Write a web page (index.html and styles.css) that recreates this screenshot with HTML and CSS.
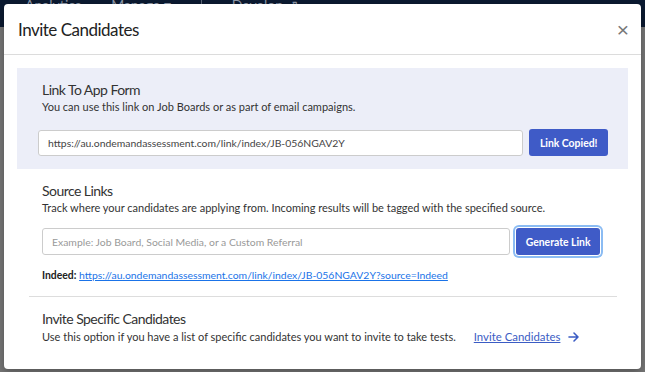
FILE: index.html
```html
<!DOCTYPE html>
<html lang="en">
<head>
    <meta charset="UTF-8">
    <meta name="viewport" content="width=device-width, initial-scale=1.0">
    <title>Invite Candidates</title>
    <link rel="stylesheet" href="styles.css">
</head>
<body>
    <!-- Page behind the modal -->
    <div class="topnav">
        <span class="nav-item nav-analytics">Analytics</span>
        <span class="nav-item nav-manage">Manage &#9662;</span>
        <span class="nav-divider"></span>
        <span class="nav-item">Develop &#8663;</span>
    </div>

    <div class="modal">
        <div class="modal-header">
            <h1>Invite Candidates</h1>
            <button class="close" type="button">&times;</button>
        </div>

        <div class="modal-body">
            <!-- Link to app form -->
            <div class="section section-shaded">
                <h2>Link To App Form</h2>
                <p>You can use this link on Job Boards or as part of email campaigns.</p>
                <div class="field-row field-row-wide">
                    <input class="text-input" type="text" value="https://au.ondemandassessment.com/link/index/JB-056NGAV2Y" readonly>
                    <button class="button-primary button-copied" type="button">Link Copied!</button>
                </div>
            </div>

            <!-- Source links -->
            <div class="section section-source">
                <h2>Source Links</h2>
                <p>Track where your candidates are applying from. Incoming results will be tagged with the specified source.</p>
                <div class="field-row">
                    <input class="text-input source-input" type="text" placeholder="Example: Job Board, Social Media, or a Custom Referral">
                    <button class="button-primary button-focus" type="button">Generate Link</button>
                </div>
                <div class="source-result">
                    <b>Indeed:</b> <a href="#">https://au.ondemandassessment.com/link/index/JB-056NGAV2Y?source=Indeed</a>
                </div>
            </div>

            <hr class="divider">

            <!-- Invite specific candidates -->
            <div class="section section-last">
                <h2>Invite Specific Candidates</h2>
                <div class="invite-row">
                    <p>Use this option if you have a list of specific candidates you want to invite to take tests.</p>
                    <a class="invite-link" href="#">Invite Candidates</a>
                    <svg class="arrow" width="12" height="12" viewBox="0 0 12 12">
                        <path d="M1 6h9M6 2l4 4-4 4" fill="none" stroke="#3b5cc4" stroke-width="1.6" stroke-linecap="round" stroke-linejoin="round"/>
                    </svg>
                </div>
            </div>
        </div>
    </div>
</body>
</html>
```

FILE: styles.css
```css
body {
    margin: 0;
    height: 372px;
    overflow: hidden;
    background: linear-gradient(#0b1a31 0, #0b1a31 27px, #767676 27px); /* navbar + dim backdrop */
    font-family: Lato, "Open Sans", sans-serif;
    color: #333;
}
.topnav {
    display: flex;
    align-items: center;
    height: 10px;
    padding-left: 25px;
    gap: 30px;
    color: #8d97a8;
    font-size: 14px;
    line-height: 10px;
    overflow: hidden;
}
.nav-divider {
    width: 1px;
    height: 10px;
    background: #5b6678;
}
.modal {
    position: absolute; /* sits over the page */
    left: 4px;
    top: 4px;
    width: 637px;
    height: 365px;
    background-color: #fff;
    border-radius: 4px;
    box-shadow: 0 3px 9px rgba(0, 0, 0, 0.3);
    overflow: hidden;
}
.modal-header {
    display: flex;
    align-items: center;
    justify-content: space-between;
    height: 50px;
    padding: 0 12px 0 14px;
    border-bottom: 1px solid #dcdcdc;
}
.modal-header h1 {
    margin: 0;
    font-size: 17px;
    font-weight: 400;
    letter-spacing: -0.5px;
    color: #222;
}
.close {
    border: none;
    background: none;
    padding: 0;
    font-size: 21px;
    line-height: 1;
    color: #777;
    font-family: Arial, sans-serif;
    cursor: pointer;
}
.modal-body {
    padding: 13px 13px 0 13px;
}
.section {
    padding: 12px 28px 10px 25px;
}
.section-shaded {
    background-color: #eceef8;
    padding: 13px 20px 13px 21px;
}
.section-shaded h2,
.section-shaded p {
    padding-left: 4px;
}
.section-source {
    padding-top: 13px;
}
.section h2 {
    margin: 0;
    font-size: 14px;
    line-height: 18px;
    font-weight: 400;
    letter-spacing: -0.55px;
    color: #333;
}
.section p {
    margin: 0;
    font-size: 11px;
    line-height: 16px;
    color: #333;
}
.field-row {
    display: flex;
    align-items: center;
    gap: 6px;
    margin-top: 12px;
}
.field-row-wide {
    margin-top: 14px;
}
.text-input {
    flex: 1;
    height: 26px;
    box-sizing: border-box;
    padding: 0 9px;
    border: 1px solid #ccc;
    border-radius: 3px;
    font-family: Lato, sans-serif;
    font-size: 10.4px;
    color: #444;
    background: #fff;
}
.source-input {
    height: 27px;
}
.source-input::placeholder {
    color: #999;
}
.button-primary {
    height: 27px;
    padding: 0 10px;
    background-color: #3f5bc7;
    color: #fff;
    border: none;
    border-radius: 3px;
    font-family: Lato, sans-serif;
    font-size: 10.4px;
    font-weight: 700;
    cursor: pointer;
}
.button-copied {
    padding: 0 10.5px;
}
.button-focus {
    padding: 0 9.5px;
    box-shadow: 0 0 0 1px #fff, 0 0 0 3px #8bbcf3;
}
.source-result {
    margin-top: 12px;
    font-size: 10.4px;
    line-height: 16px;
    color: #222;
}
.source-result a {
    color: #1a73e8;
}
.divider {
    border: none;
    border-top: 1px solid #ddd;
    margin: 3px 11px 0 12px;
}
.section-last {
    padding-top: 13px;
}
.section-last p {
    margin-top: 1px;
}
.invite-row {
    display: flex;
    align-items: center;
}
.invite-link {
    margin-left: 18px;
    font-size: 11.4px;
    color: #3b5cc4;
}
.arrow {
    margin-left: 8px;
}
```
